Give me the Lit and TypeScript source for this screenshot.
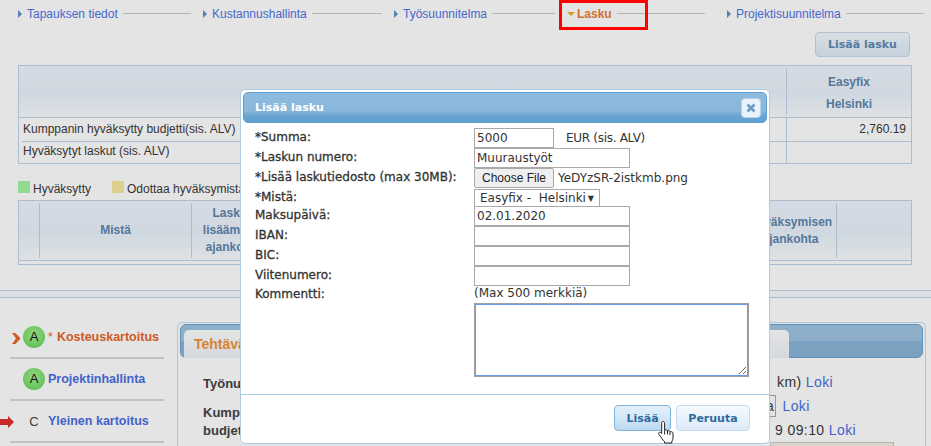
import { LitElement, css, html } from "lit";
import { customElement } from "lit/decorators.js";

const navItems = [
  { label: "Tapauksen tiedot", cls: "w1" },
  { label: "Kustannushallinta", cls: "w2" },
  { label: "Työsuunnitelma", cls: "w3" },
  { label: "Lasku", cls: "w4 active" },
  { label: "Projektisuunnitelma", cls: "w5" },
];

@customElement("app-root")
export class AppRoot extends LitElement {
  static override styles = css`
    :host {
      display: block;
      position: relative;
      width: 931px;
      height: 446px;
      overflow: hidden;
      background: #fff;
      font-family: "Liberation Sans", Arial, sans-serif;
      font-size: 12px;
      color: #3a3a3a;
    }

    /* top nav */
    .nav {
      display: grid;
      grid-template-columns: 185px 191px 173px 160px 197px;
      padding: 6px 0 0 18px;
      height: 23px;
      box-sizing: border-box;
    }
    .step {
      display: flex;
      align-items: center;
      height: 15px;
      padding-right: 12px;
      color: #4f74e6;
    }
    .w4 { padding-right: 22px; }
    .w5 { padding-right: 0; }
    .step .arrow {
      width: 0;
      height: 0;
      margin-right: 5px;
      border-left: 4px solid #5b8fd0;
      border-top: 4px solid transparent;
      border-bottom: 4px solid transparent;
    }
    .step .line {
      flex: 1;
      height: 1px;
      margin-left: 5px;
      background: #ccc;
    }
    .step.active { color: #ea8136; font-weight: bold; }
    .step.active .arrow {
      margin: 0 2px 0 0;
      border-top: 4px solid #f0b020;
      border-left: 4px solid transparent;
      border-right: 4px solid transparent;
      border-bottom: 0;
      width: 0;
    }
    .marker {
      position: absolute;
      left: 559px;
      top: 0;
      width: 89px;
      height: 30px;
      box-sizing: border-box;
      border: 3px solid #f00;
      z-index: 5;
    }

    /* action row */
    .actions {
      display: flex;
      justify-content: flex-end;
      padding: 9px 21px 8px 0;
    }
    .btn {
      box-sizing: border-box;
      display: flex;
      align-items: center;
      justify-content: center;
      border: 1px solid #c5daed;
      border-radius: 4px;
      background: linear-gradient(#f4f9fe 0%, #e8f2fb 50%, #dcebf8 100%);
      color: #2f6a9e;
      font-family: "DejaVu Sans", Verdana, sans-serif;
      font-size: 11px;
      font-weight: bold;
    }
    .add { width: 95px; height: 25px; color: #5f8bb3; }

    /* budget table */
    .tbl {
      margin-left: 18px;
      width: 894px;
      box-sizing: border-box;
      border: 1px solid #c0d4e8;
    }
    .head {
      background: linear-gradient(#eef5ff 0%, #eaf2fb 48%, #e7f1fb 50%, #f9fdff 100%);
      color: #5f86ad;
      font-weight: bold;
    }
    .budget-head {
      display: grid;
      grid-template-columns: 767px 1fr;
      height: 52px;
      padding-top: 2px;
      box-sizing: border-box;
      border-bottom: 1px solid #c0d4e8;
    }
    .budget-head .who {
      display: flex;
      flex-direction: column;
      align-items: center;
      gap: 6px;
      padding-top: 6px;
      height: 47px;
      box-sizing: border-box;
      border-left: 1px solid #c0d4e8;
      line-height: 16px;
    }
    .budget-row {
      display: grid;
      grid-template-columns: 767px 1fr;
      height: 22px;
      line-height: 23px;
    }
    .budget-row .name {
      margin-left: 3px;
      border-bottom: 1px solid #c0d4e8;
      padding-left: 1px;
    }
    .budget-row .val {
      border-left: 1px solid #c0d4e8;
      text-align: right;
      padding-right: 5px;
      border-bottom: 1px solid #c0d4e8;
    }
    .budget-row.last { height: 23px; }
    .budget-row.last .name, .budget-row.last .val { border-bottom: 0; }

    /* legend */
    .legend {
      display: flex;
      margin: 17px 0 0 18px;
      height: 19px;
      line-height: 16px;
    }
    .legend span { display: flex; gap: 3px; margin-right: 21px; }
    .swatch { width: 12px; height: 12px; }
    .ok { background: #a0f5a0; }
    .wait { background: #f5e89e; }

    /* invoices table */
    .inv { height: 65px; }
    .inv-head {
      display: grid;
      grid-template-columns: 21px 152px 84px 469px 92px 1fr;
      height: 60px;
      padding: 2px 0;
      box-sizing: border-box;
      border-bottom: 1px solid #c0d4e8;
      text-align: center;
      line-height: 17px;
    }
    .inv-head > div {
      display: flex;
      align-items: center;
      justify-content: center;
      border-right: 1px solid #c0d4e8;
    }
    .inv-head > div:last-child { border-right: 0; }

    /* lower section */
    .band {
      margin-top: 25px;
      height: 6px;
      background: #f6fafe;
      border-top: 1px solid #c0d4e8;
      border-bottom: 1px solid #c0d4e8;
    }
    .lower {
      display: grid;
      grid-template-columns: 177px 749px;
      padding-top: 24px;
    }
    .side { padding: 0 0 0 10px; margin-top: -5px; }
    .side-item {
      display: flex;
      align-items: center;
      width: 154px;
      height: 42px;
      box-sizing: border-box;
      border-bottom: 2px solid #d8d8d8;
      font-size: 12.5px;
      font-weight: bold;
      color: #4a6fe3;
      position: relative;
    }
    .side-item.now { color: #e8662c; }
    .dot {
      width: 22px;
      height: 22px;
      margin: 0 3px 0 13px;
      flex: none;
      border-radius: 50%;
      background: radial-gradient(circle at 50% 40%, #a8f090 0%, #7ce070 55%, #5cc850 100%);
      color: #111;
      font-weight: normal;
      font-size: 13px;
      text-align: center;
      line-height: 22px;
    }
    .plain {
      width: 22px;
      margin: 0 3px 0 13px;
      flex: none;
      text-align: center;
      font-weight: normal;
      font-size: 13px;
      color: #444;
    }
    .mark { position: absolute; }
    .star { font-weight: normal; margin-right: 4px; }
    .panel {
      height: 140px;
      box-sizing: border-box;
      border: 1px solid #c8dcee;
      border-radius: 5px;
      padding: 1px 2px;
      width: 749px;
    }
    .tabs {
      height: 34px;
      box-sizing: border-box;
      padding: 5px 0 0 3px;
      border: 1px solid #69a3d0;
      border-radius: 6px;
      background: linear-gradient(#9fc4e2 0%, #9fc4e2 48%, #8ab4d8 52%, #8ab4d8 100%);
    }
    .tab {
      width: 605px;
      height: 28px;
      box-sizing: border-box;
      padding: 6px 0 0 10px;
      background: linear-gradient(#fff, #eef3f9);
      border-radius: 5px 5px 0 0;
      color: #ef9438;
      font-size: 14px;
      font-weight: bold;
    }
    .panel-body {
      display: grid;
      grid-template-columns: 572px 1fr;
      padding: 12px 0 0 23px;
      font-size: 14px;
    }
    .panel-body b { display: block; color: #444; font-size: 13px; line-height: 18px; }
    .panel-body .first { margin-top: 5px; }
    .panel-body .lbl { margin-top: 11px; }
    .panel-body .rt { letter-spacing: 0.4px; line-height: 24px; }
    .panel-body .km { margin-left: 2px; }
    .panel-body a { color: #4a6fe3; }
    .boxed {
      border: 1px solid #aaa;
      padding: 2px 1px;
      margin: 0 2px 0 -11px;
    }
    .thumb {
      position: absolute;
      left: 770px;
      top: 442px;
      width: 122px;
      height: 6px;
      background: #f4eee0;
      border: 1px solid #ccc;
    }

    /* dim layer and dialog */
    .dim {
      position: absolute;
      inset: 0;
      background: rgba(0, 0, 0, 0.105);
      z-index: 2;
    }
    .dialog {
      position: absolute;
      left: 240px;
      top: 89px;
      width: 530px;
      height: 355px;
      box-sizing: border-box;
      padding: 2px;
      background: #fff;
      border: 1px solid #a9cbe3;
      border-radius: 5px;
      z-index: 3;
      font-family: "DejaVu Sans", Verdana, sans-serif;
    }
    .title {
      display: flex;
      align-items: center;
      justify-content: space-between;
      height: 31px;
      box-sizing: border-box;
      padding: 0 5px 0 11px;
      border: 1px solid #5d9dd0;
      border-radius: 5px;
      background: linear-gradient(#8dbbde 0%, #8ab8dc 60%, #6ba5d2 78%, #60a0d0 100%);
      color: #fff;
      font-size: 11px;
      font-weight: bold;
    }
    .close {
      display: flex;
      align-items: center;
      justify-content: center;
      width: 20px;
      height: 20px;
      box-sizing: border-box;
      background: #e8f3fb;
      border: 1px solid #b5d4ec;
      border-radius: 4px;
    }
    .form {
      display: grid;
      grid-template-columns: 219px 1fr;
      grid-template-rows: 20px 20px 20px 18px 20px 20px 20px 19px 18px;
      padding: 5px 0 0 12px;
      font-size: 12px;
      color: #333;
    }
    .form label { color: #333; line-height: 18px; -webkit-text-stroke: 0.3px #333; }
    .form label.tight { line-height: 18px; }
    .cell { display: flex; align-items: center; height: 20px; }
    .cell.tight { height: 16px; }
    input {
      box-sizing: border-box;
      height: 20px;
      padding: 0 2px;
      border: 1px solid #a9a9a9;
      font: 12px "DejaVu Sans", Verdana, sans-serif;
      color: #333;
      margin: 0;
      outline: none;
    }
    .i80 { width: 80px; }
    .i156 { width: 156px; }
    .eur { margin-left: 12px; letter-spacing: -0.3px; }
    .choose {
      box-sizing: border-box;
      width: 80px;
      height: 20px;
      background: #efefef;
      border: 1px solid #a9a9a9;
      border-radius: 2px;
      font: 12px "Liberation Sans", Arial, sans-serif;
      color: #222;
      padding: 0;
      margin-right: 4px;
    }
    .select {
      display: flex;
      justify-content: space-between;
      align-items: center;
      box-sizing: border-box;
      width: 126px;
      height: 18px;
      padding: 0 5px 0 5px;
      border: 1px solid #a9a9a9;
    }
    .select i { font-style: normal; font-size: 8px; }
    .text-row {
      display: grid;
      grid-template-columns: 219px 1fr;
      padding: 0 0 0 12px;
      font-size: 12px;
    }
    textarea {
      box-sizing: border-box;
      width: 275px;
      height: 74px;
      margin: 0;
      border: 2px solid #6a9be8;
      outline: 1px solid #a0a0a0;
      outline-offset: -1px;
      display: block;
    }
    .foot {
      display: flex;
      justify-content: flex-end;
      gap: 5px;
      margin: 17px -2px 0 -2px;
      padding: 10px 19px 0 0;
      border-top: 1px solid #a9cfe9;
      position: relative;
    }
    .foot .btn { height: 26px; }
    .save {
      width: 57px;
      border-color: #7db6dd;
      background: linear-gradient(#e4f0fa 0%, #d4e6f5 50%, #bcd8ee 100%);
    }
    .cancel { width: 74px; }
    .hand {
      position: absolute;
      left: 657px;
      top: 420px;
      z-index: 4;
    }
  `;

  override render() {
    return html`
      <div class="nav">
        ${navItems.map(
          (n) => html`
            <div class="step ${n.cls}">
              <span class="arrow"></span><span>${n.label}</span><span class="line"></span>
            </div>
          `
        )}
      </div>
      <div class="actions"><div class="btn add">Lisää lasku</div></div>

      <div class="tbl">
        <div class="budget-head head">
          <div></div>
          <div class="who"><span>Easyfix</span><span>Helsinki</span></div>
        </div>
        <div class="budget-row">
          <div class="name">Kumppanin hyväksytty budjetti(sis. ALV)</div>
          <div class="val">2,760.19</div>
        </div>
        <div class="budget-row last">
          <div class="name">Hyväksytyt laskut (sis. ALV)</div>
          <div class="val"></div>
        </div>
      </div>

      <div class="legend">
        <span><i class="swatch ok"></i>Hyväksytty</span>
        <span><i class="swatch wait"></i>Odottaa hyväksymistä</span>
      </div>

      <div class="tbl inv">
        <div class="inv-head head">
          <div></div>
          <div>Mistä</div>
          <div>Laskun<br />lisäämisen<br />ajankohta</div>
          <div></div>
          <div>Hyväksymisen<br />ajankohta</div>
          <div></div>
        </div>
      </div>

      <div class="band"></div>

      <div class="lower">
        <div class="side">
          <div class="side-item now">
            <svg class="mark" style="left:2px;top:16px" width="9" height="11" viewBox="0 0 9 11">
              <path d="M0 0h3.500l5 5.500-5 5.500H0l4-5.500z" fill="#e8662c" />
            </svg>
            <span class="dot">A</span><span class="star">*</span>Kosteuskartoitus
          </div>
          <div class="side-item"><span class="dot">A</span>Projektinhallinta</div>
          <div class="side-item">
            <svg class="mark" style="left:-10px;top:15px" width="14" height="12" viewBox="0 0 14 12">
              <path d="M0 3h8V0l6 6-6 6V9H0z" fill="#e03030" />
            </svg>
            <span class="plain">C</span>Yleinen kartoitus
          </div>
        </div>
        <div class="panel">
          <div class="tabs"><div class="tab">Tehtävät</div></div>
          <div class="panel-body">
            <div>
              <b class="first">Työnumero</b>
              <b class="lbl">Kumppanin<br />budjetti</b>
            </div>
            <div class="rt">
              <span class="km">km)</span> <a>Loki</a><br />
              <span class="boxed">a</span> <a>Loki</a><br />
              9 09:10 <a>Loki</a>
            </div>
          </div>
        </div>
      </div>
      <div class="thumb"></div>

      <div class="dim"></div>
      <div class="marker"></div>

      <div class="dialog">
        <div class="title">
          <span>Lisää lasku</span>
          <span class="close">
            <svg width="10" height="10" viewBox="0 0 10 10">
              <path d="M1.500 1.500l7 7M8.500 1.500l-7 7" stroke="#6a9cc6" stroke-width="2.600" />
            </svg>
          </span>
        </div>
        <div class="form">
          <label>*Summa:</label>
          <div class="cell"><input class="i80" value="5000" /><span class="eur">EUR (sis. ALV)</span></div>
          <label>*Laskun numero:</label>
          <div class="cell"><input class="i156" value="Muuraustyöt" /></div>
          <label>*Lisää laskutiedosto (max 30MB):</label>
          <div class="cell"><button class="choose">Choose File</button><span>YeDYzSR-2istkmb.png</span></div>
          <label>*Mistä:</label>
          <div class="cell"><div class="select"><span>Easyfix - &nbsp;Helsinki</span><i>▼</i></div></div>
          <label>Maksupäivä:</label>
          <div class="cell"><input class="i156" value="02.01.2020" /></div>
          <label>IBAN:</label>
          <div class="cell"><input class="i156" /></div>
          <label>BIC:</label>
          <div class="cell"><input class="i156" /></div>
          <label>Viitenumero:</label>
          <div class="cell"><input class="i156" /></div>
          <label class="tight">Kommentti:</label>
          <div class="cell tight">(Max 500 merkkiä)</div>
        </div>
        <div class="text-row">
          <div></div>
          <textarea></textarea>
        </div>
        <div class="foot">
          <div class="btn save">Lisää</div>
          <div class="btn cancel">Peruuta</div>
        </div>
      </div>

      <svg class="hand" width="20" height="25" viewBox="0 0 20 25">
        <path
          d="M6 1.500c1 0 1.600.7 1.600 1.700v7l1.200-.3c.9-.2 1.400.2 1.600.8l.1.300 1.100-.2c.9-.1 1.400.3 1.600 1l1-.1c1.100-.1 1.800.6 1.800 1.700v4c0 1.800-.5 3-1.200 4.100v1.500H7.500v-1.400c-1-.8-2-2-3-3.700L2 14.500c-.6-.9-.4-1.700.2-2.100.7-.4 1.500-.2 2 .5l.5.700V3.200c0-1 .4-1.700 1.300-1.700z"
          fill="#fff"
          stroke="#222"
          stroke-width="1"
        />
        <path d="M7.600 10.500v4M10.500 11v3.500M13 12v3" stroke="#222" stroke-width="1" fill="none" />
      </svg>
    `;
  }
}
